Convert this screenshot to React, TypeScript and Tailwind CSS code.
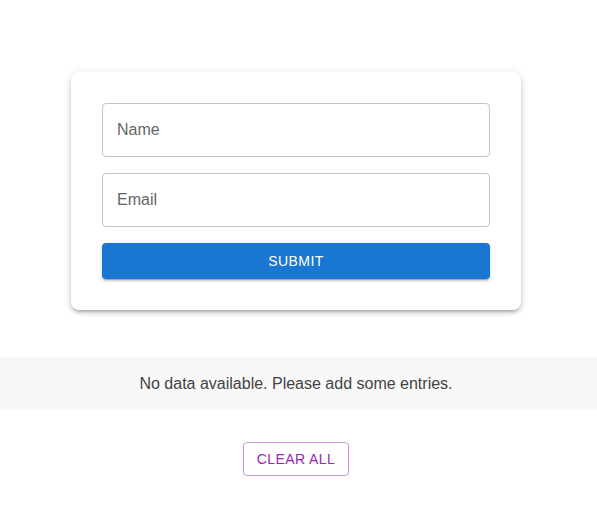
import { useState } from "react";

type Entry = { name: string; email: string };

export default function App() {
  const [name, setName] = useState("");
  const [email, setEmail] = useState("");
  const [entries, setEntries] = useState<Entry[]>([]);

  const submitHandler = (e: React.FormEvent) => {
    e.preventDefault();
    if (!name || !email) return;
    setEntries([...entries, { name, email }]);
    setName("");
    setEmail("");
  };

  const inputClasses =
    "w-full h-[54px] px-[14px] rounded-[4px] border border-[#c4c4c4] text-[16px] text-[#212121] placeholder:text-[#666666] outline-none focus:border-[#1976d2]";

  return (
    <div className="min-h-screen bg-white font-['Liberation_Sans',Arial,sans-serif]">
      <div className="w-[592px] flex justify-center pt-[72px]">
        <form
          onSubmit={submitHandler}
          className="w-[450px] p-[31px] bg-white rounded-[8px] flex flex-col gap-4 shadow-[0px_3px_3px_-2px_rgba(0,0,0,0.2),0px_3px_4px_0px_rgba(0,0,0,0.14),0px_1px_8px_0px_rgba(0,0,0,0.12)]"
        >
          <input
            className={inputClasses}
            placeholder="Name"
            value={name}
            onChange={(e) => setName(e.target.value)}
          />
          <input
            className={inputClasses}
            placeholder="Email"
            value={email}
            onChange={(e) => setEmail(e.target.value)}
          />
          <button
            type="submit"
            className="h-9 w-full rounded-[4px] bg-[#1976d2] text-white text-[14px] uppercase tracking-[0.4px] shadow-[0px_3px_1px_-2px_rgba(0,0,0,0.2),0px_2px_2px_0px_rgba(0,0,0,0.14),0px_1px_5px_0px_rgba(0,0,0,0.12)]"
          >
            Submit
          </button>
        </form>
      </div>

      <div className="mt-[47px] h-[53px] bg-[#f8f8f8] flex items-center">
        <div className="w-[592px] text-center text-[16px] text-[#444444]">
          {entries.length === 0
            ? "No data available. Please add some entries."
            : entries.map((item) => item.name).join(", ")}
        </div>
      </div>

      <div className="w-[592px] flex justify-center mt-8">
        <button
          onClick={() => setEntries([])}
          className="h-[34px] w-[106px] rounded-[4px] border border-[rgba(156,39,176,0.5)] text-[#9c27b0] text-[14px] uppercase tracking-[0.4px]"
        >
          Clear All
        </button>
      </div>
    </div>
  );
}
